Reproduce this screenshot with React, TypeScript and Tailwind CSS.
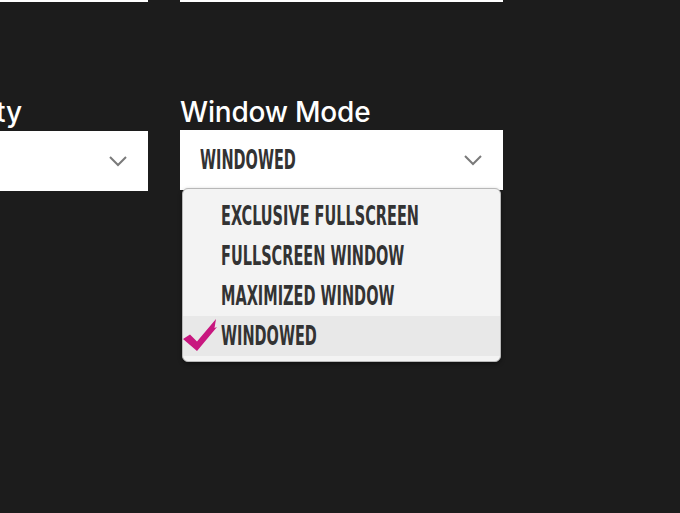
const labelFont = "font-['Inter','Noto_Sans',sans-serif]";
const caps = "font-['Liberation_Sans_Narrow','DejaVu_Sans_Condensed',sans-serif]";

const Chevron = () => (
  <svg width="20" height="12" viewBox="0 0 20 12" fill="none">
    <path d="M2 2l8 8 8-8" stroke="#7a7a7a" strokeWidth="2" />
  </svg>
);

const Check = () => (
  <svg width="36" height="34" viewBox="0 0 36 34">
    <path
      d="M0 20 L7 15.5 L14 22.5 L33 0 L31.5 9 L34 8 L14 32 Z"
      fill="#c8177f"
    />
  </svg>
);

const options = ["Exclusive Fullscreen", "Fullscreen Window", "Maximized Window", "Windowed"];

const App = () => {
  return (
    <div className="w-[680px] h-[513px] bg-[#1c1c1c] overflow-hidden">
      <div className="flex gap-[32px] -ml-[175px]">
        <div className="w-[323px] h-[2px] bg-white" />
        <div className="w-[323px] h-[2px] bg-white" />
      </div>

      <div className="flex gap-[32px] -ml-[175px] mt-[92px]">
        <div className="w-[323px] flex flex-col">
          <span className={`${labelFont} font-medium text-white text-[28px] leading-[36px] whitespace-nowrap -ml-[6px]`}>Texture Quality</span>
          <div className="h-[60px] bg-white flex items-center justify-end pr-[20px] mt-[1px]">
            <Chevron />
          </div>
        </div>

        <div className="w-[323px] flex flex-col relative">
          <span className={`${labelFont} font-medium text-white text-[28px] leading-[36px] tracking-[-0.2px]`}>Window Mode</span>
          <div className="h-[60px] bg-white flex items-center justify-between pl-[20px] pr-[20px]">
            <span className={`${caps} uppercase font-bold text-[#333] text-[26px] inline-block origin-left scale-x-[0.62] whitespace-nowrap`}>
              Windowed
            </span>
            <Chevron />
          </div>

          <div className="absolute left-[2px] right-[2px] top-[94px] bg-[#f3f3f3] border border-[#b8b8b8] rounded-[6px] shadow-[0_2px_4px_rgba(0,0,0,0.4)] pt-[7px] pb-[5px]">
            {options.map((o, i) => {
              const sel = i === options.length - 1;
              return (
                <div
                  key={o}
                  className={`h-[40px] flex items-center relative pl-[38px] ${sel ? "bg-[#e8e8e8]" : ""}`}
                >
                  {sel && (
                    <div className="absolute left-[0px] top-[3px]">
                      <Check />
                    </div>
                  )}
                  <span className={`${caps} uppercase font-bold text-[#333] text-[26px] inline-block origin-left scale-x-[0.62] whitespace-nowrap`}>
                    {o}
                  </span>
                </div>
              );
            })}
          </div>
        </div>
      </div>
    </div>
  );
};

export default App;
